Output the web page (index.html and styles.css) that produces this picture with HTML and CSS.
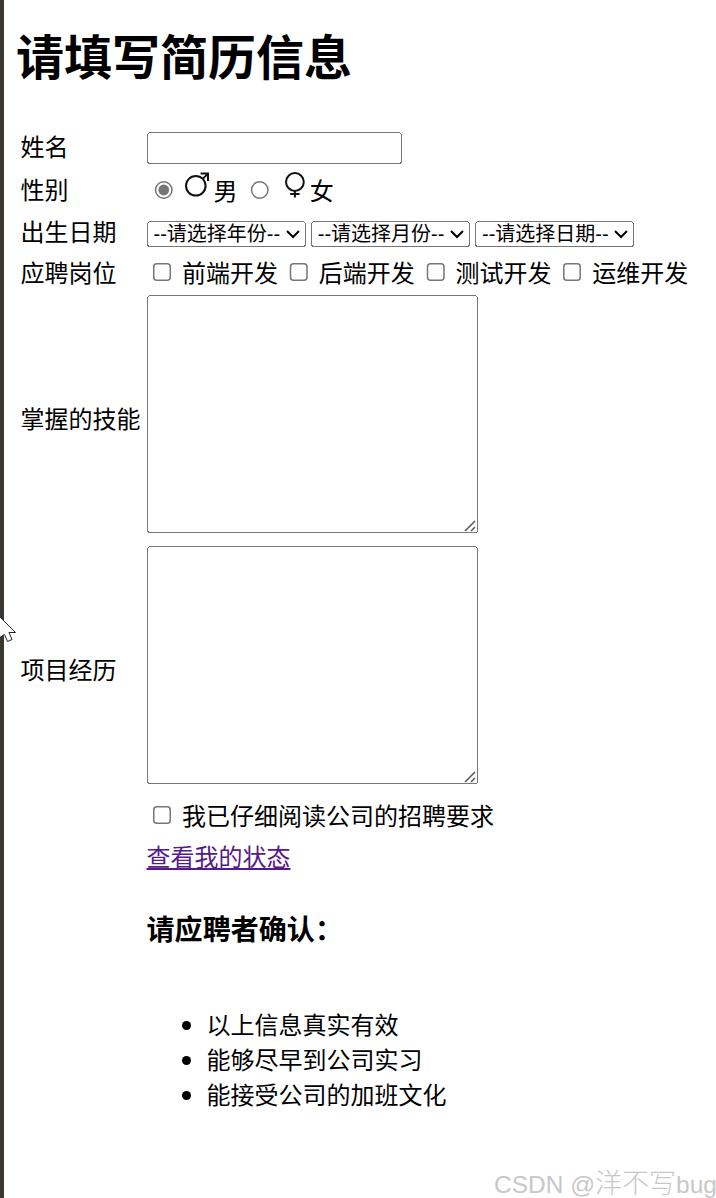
FILE: index.html
```
<!DOCTYPE html>
<html lang="zh-CN">
<head>
    <meta charset="UTF-8">
    <meta name="viewport" content="width=device-width, initial-scale=1.0">
    <title>请填写简历信息</title>
    <link rel="stylesheet" href="styles.css">
</head>
<body>
    <main>
        <h1>请填写简历信息</h1>
        <table>
            <tr class="row-name">
                <td><label for="name">姓名</label></td>
                <td><input type="text" id="name"></td>
            </tr>
            <tr class="row-sex">
                <td>性别</td>
                <td>
                    <input type="radio" name="sex" id="male" checked>
                    <label for="male"><svg class="icon" viewBox="0 0 30 30"><circle cx="12.8" cy="15.8" r="9.8"/><path d="M19.7 8.9L25 3.6M17.6 3.6H25V11"/></svg>男</label>
                    <input type="radio" name="sex" id="female">
                    <label for="female"><svg class="icon" viewBox="0 0 30 30"><circle cx="14.9" cy="12" r="8.9"/><path d="M14.9 20.9V27.5M10.2 23.9H19.6"/></svg>女</label>
                </td>
            </tr>
            <tr class="row-birth">
                <td>出生日期</td>
                <td>
                    <div class="selects">
                        <select><option>--请选择年份--</option></select>
                        <select><option>--请选择月份--</option></select>
                        <select><option>--请选择日期--</option></select>
                    </div>
                </td>
            </tr>
            <tr class="row-job">
                <td>应聘岗位</td>
                <td>
                    <input type="checkbox" id="frontend">
                    <label for="frontend">前端开发</label>
                    <input type="checkbox" id="backend">
                    <label for="backend">后端开发</label>
                    <input type="checkbox" id="test">
                    <label for="test">测试开发</label>
                    <input type="checkbox" id="ops">
                    <label for="ops">运维开发</label>
                </td>
            </tr>
            <tr class="row-text">
                <td>掌握的技能</td>
                <td>
                    <div class="area">
                        <textarea></textarea>
                        <svg class="grip" viewBox="0 0 12 12"><path d="M1 11L11 1M7 11L11 7"/></svg>
                    </div>
                </td>
            </tr>
            <tr class="row-text">
                <td>项目经历</td>
                <td>
                    <div class="area">
                        <textarea></textarea>
                        <svg class="grip" viewBox="0 0 12 12"><path d="M1 11L11 1M7 11L11 7"/></svg>
                    </div>
                </td>
            </tr>
            <tr class="row-read">
                <td></td>
                <td>
                    <input type="checkbox" id="read">
                    <label for="read">我已仔细阅读公司的招聘要求</label>
                </td>
            </tr>
            <tr class="row-link">
                <td></td>
                <td><a href="#">查看我的状态</a></td>
            </tr>
            <tr>
                <td></td>
                <td>
                    <h3>请应聘者确认：</h3>
                    <ul>
                        <li>以上信息真实有效</li>
                        <li>能够尽早到公司实习</li>
                        <li>能接受公司的加班文化</li>
                    </ul>
                </td>
            </tr>
        </table>
    </main>
    <svg class="cursor" viewBox="0 0 17 28"><path d="M-6 -5L15.5 16.5H9L12 23.5L7.5 25.5L4.5 18.5L-1 22"/></svg>
    <div class="watermark">CSDN @<span>洋不写</span>bug</div>
</body>
</html>
```
FILE: styles.css
```
html {
    overflow: hidden;
}
body {
    position: relative;
    margin: 0;
    padding-left: 4px;
    height: 1198px;
    box-sizing: border-box;
    background: linear-gradient(to right, #3b3834 4px, white 4px);
    color: black;
    font-family: "Noto Sans CJK SC", sans-serif;
}
main {
    zoom: 1.5;
    padding: 12.667px 8px 0;
}
h1 {
    margin: 0 0 22.667px;
    font-size: 32px;
    line-height: 47px;
}
table {
    border-spacing: 0;
    font-size: 16px;
    line-height: 23.333px;
    white-space: nowrap;
}
td {
    padding: 0;
}
td:first-child {
    width: 84px;
    padding-left: 3px;
    box-sizing: content-box;
}
.row-name {
    height: 29.333px;
}
.row-sex {
    height: 28.667px;
}
.row-birth {
    height: 27.333px;
}
.row-job {
    height: 27.333px;
}
.row-text {
    height: 167.333px;
}
.row-read {
    height: 27.333px;
}
.row-link {
    height: 27.333px;
}
#name {
    display: block;
    box-sizing: border-box;
    width: 170px;
    height: 21.333px;
    margin-top: 3px;
}
input[type="radio"] {
    accent-color: #767676;
}
.icon {
    width: 20px;
    height: 20px;
    fill: none;
    stroke: #111;
    stroke-width: 2;
}
.selects {
    display: flex;
    gap: 3.5px;
    padding-top: 4.667px;
}
select {
    box-sizing: border-box;
    width: 106px;
    height: 17.333px;
    padding: 0;
    font-family: "Liberation Sans", "Noto Sans CJK SC", sans-serif;
}
.area {
    position: relative;
    width: 220.667px;
    margin-bottom: 5.333px;
}
textarea {
    display: block;
    box-sizing: border-box;
    width: 220.667px;
    height: 158.667px;
}
textarea::-webkit-resizer {
    background: white;
}
.grip {
    position: absolute;
    right: 1.333px;
    bottom: 0.667px;
    width: 8px;
    height: 8px;
    fill: none;
    stroke: #555;
    stroke-width: 1.5;
    pointer-events: none;
}
a {
    color: #551a8b;
}
h3 {
    margin: 20.667px 0 38px;
    font-size: 18.72px;
    line-height: 28px;
}
ul {
    margin: 0;
    padding-left: 40px;
}
.cursor {
    position: absolute;
    left: 0;
    top: 616px;
    width: 17px;
    height: 28px;
    fill: white;
    stroke: #223;
    stroke-width: 1;
}
.watermark {
    position: absolute;
    right: -1px;
    bottom: -1px;
    color: #c8c8c8;
    font-family: "Liberation Sans", "Noto Sans CJK SC", sans-serif;
    font-size: 24.5px;
    line-height: 28px;
}
.watermark span {
    font-size: 27px;
    font-weight: 300;
}
```
